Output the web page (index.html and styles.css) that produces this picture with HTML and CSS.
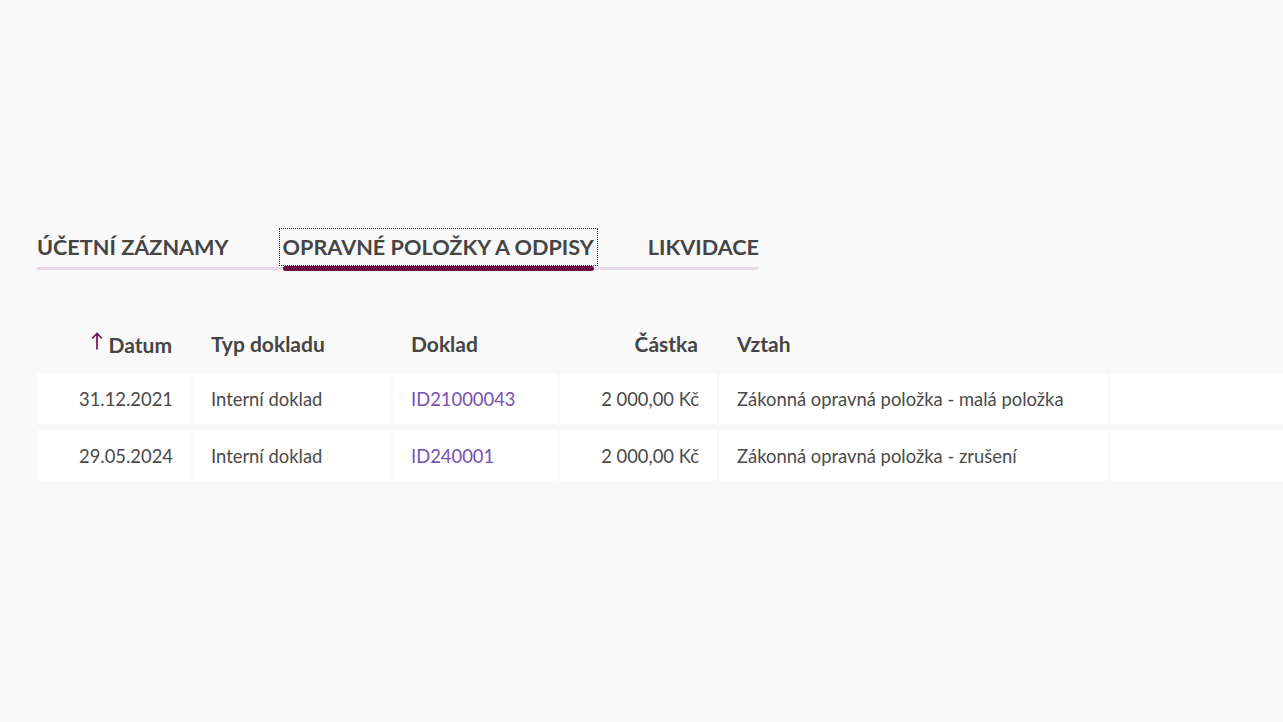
FILE: index.html
```html
<!DOCTYPE html>
<html lang="cs">
<head>
<meta charset="utf-8">
<link rel="stylesheet" href="styles.css">
</head>
<body>
<div class="page">
  <div class="tabs">
    <div class="tab"><span class="label">ÚČETNÍ ZÁZNAMY</span></div>
    <div class="tab active"><span class="label">OPRAVNÉ POLOŽKY A ODPISY</span></div>
    <div class="tab"><span class="label">LIKVIDACE</span></div>
  </div>
  <table class="grid">
    <thead>
      <tr>
        <th class="c1 right"><span class="arrow"><svg width="12" height="18" viewBox="0 0 12 18"><path d="M6 17.5V1.5M1.2 6.3L6 1.5l4.8 4.8" fill="none" stroke="#6e1552" stroke-width="1.7"/></svg></span>Datum</th>
        <th class="c2">Typ dokladu</th>
        <th class="c3">Doklad</th>
        <th class="c4 right">Částka</th>
        <th class="c5">Vztah</th>
        <th class="c6"></th>
      </tr>
    </thead>
    <tbody>
      <tr>
        <td class="right">31.12.2021</td>
        <td>Interní doklad</td>
        <td><a class="link">ID21000043</a></td>
        <td class="right">2 000,00 Kč</td>
        <td>Zákonná opravná položka - malá položka</td>
        <td></td>
      </tr>
      <tr>
        <td class="right">29.05.2024</td>
        <td>Interní doklad</td>
        <td><a class="link">ID240001</a></td>
        <td class="right">2 000,00 Kč</td>
        <td>Zákonná opravná položka - zrušení</td>
        <td></td>
      </tr>
    </tbody>
  </table>
</div>
</body>
</html>
```
FILE: styles.css
```css
html, body {
  margin: 0;
  padding: 0;
  background: #f9f9f9;
  overflow: hidden;
}
body {
  font-family: Lato, "Open Sans", sans-serif;
  color: #454545;
}
.page {
  padding: 232px 0 0 37px;
  width: 1400px;
}
.tabs {
  display: flex;
  align-items: flex-start;
  gap: 54px;
  width: 721px;
  border-bottom: 3px solid #e8d9e8;
  box-sizing: border-box;
}
.tab {
  display: flex;
  flex-direction: column;
  margin-bottom: -4px;
}
.tab::after {
  content: "";
  display: block;
  height: 5px;
  margin-top: 4px;
  border-radius: 3px;
  background: transparent;
}
.tab.active::after {
  background: #6b0a48;
}
.label {
  font-size: 21.65px;
  font-weight: 700;
  line-height: 30px;
  color: #454545;
  white-space: nowrap;
}
.tab.active .label {
  outline: 1px dotted #222;
  outline-offset: 3px;
}
.grid {
  margin-top: 49px;
  border-collapse: separate;
  border-spacing: 2px 0;
  margin-left: -2px;
  table-layout: fixed;
}
th {
  font-size: 21px;
  font-weight: 700;
  text-align: left;
  padding: 0 18px 6px;
  height: 54px;
  color: #454545;
}
td {
  background: #fff;
  font-size: 18.4px;
  height: 51px;
  padding: 0 18px;
  color: #4a4a4a;
  border-radius: 2px;
  border-bottom: 6px solid #f9f9f9;
  background-clip: padding-box;
  white-space: nowrap;
}
tbody tr:last-child td { border-bottom: 0; }
.right { text-align: right; }
th.right { padding-right: 19px; }
.c1 { width: 154px; box-sizing: border-box; }
.c2 { width: 198px; box-sizing: border-box; }
.c3 { width: 165px; box-sizing: border-box; }
.c4 { width: 157px; box-sizing: border-box; padding-right: 20px; }
.c5 { width: 389px; box-sizing: border-box; }
.c6 { width: 300px; box-sizing: border-box; }
.arrow {
  display: inline-block;
  vertical-align: 3px;
  margin-right: 6px;
}
.link {
  color: #7a4fb3;
  text-decoration: none;
}
```
